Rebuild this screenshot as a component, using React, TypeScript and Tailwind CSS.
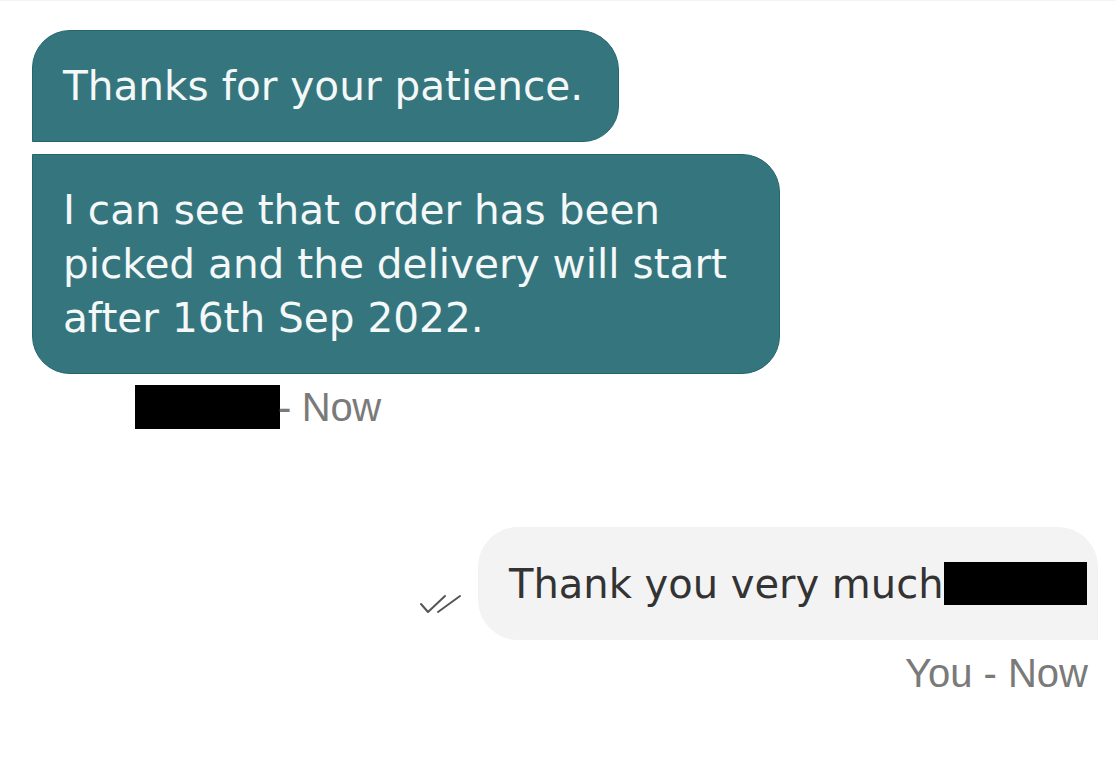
import React from "react";

const bubbleFont = { fontFamily: '"DejaVu Sans", "Open Sans", sans-serif' };
const metaFont = { fontFamily: '"Liberation Sans", Arial, sans-serif' };

function DoubleTick() {
  return (
    <svg width="44" height="20" viewBox="0 0 44 20" fill="none" className="shrink-0">
      <path d="M3 10 L10 18 L27 2" stroke="#555" strokeWidth="2" strokeLinecap="round" strokeLinejoin="round" />
      <path d="M20 18 L42 2" stroke="#555" strokeWidth="2" strokeLinecap="round" />
    </svg>
  );
}

export default function App() {
  return (
    <div className="min-h-screen bg-white border-t border-gray-100 pt-[29px]">
      {/* agent messages */}
      <div className="flex flex-col items-start pl-[32px]" style={bubbleFont}>
        <div className="w-[587px] bg-[#35767e] border border-[#23666f] text-[#f4f8f8] rounded-tl-[38px] rounded-tr-[40px] rounded-br-[36px] pl-[30px] py-[28px] text-[40.6px] leading-[54px] whitespace-nowrap">
          Thanks for your patience.
        </div>
        <div className="w-[748px] mt-[12px] bg-[#35767e] border border-[#23666f] text-[#f4f8f8] rounded-tr-[38px] rounded-br-[38px] rounded-bl-[38px] pl-[30px] py-[28px] text-[40.6px] leading-[54px] whitespace-nowrap">
          <span className="block">I can see that order has been</span>
          <span className="block">picked and the delivery will start</span>
          <span className="block">after 16th Sep 2022.</span>
        </div>
        <div className="mt-[11px] ml-[103px] flex items-center text-[40px] leading-[44px] text-[#7a7a7a] tracking-[-0.3px]" style={metaFont}>
          <span className="inline-block w-[145px] h-[44px] bg-black" />
          <span className="-ml-[2px]">- Now</span>
        </div>
      </div>

      {/* my message */}
      <div className="mt-[98px] flex flex-col items-end pr-[18px]">
        <div className="flex items-center gap-[16px]">
          <div className="mt-[40px]">
            <DoubleTick />
          </div>
          <div
            className="w-[620px] h-[113px] bg-[#f3f3f3] rounded-tl-[40px] rounded-bl-[40px] rounded-tr-[40px] pl-[31px] flex items-center text-[40px] text-[#333]"
            style={bubbleFont}
          >
            <span>Thank you very much</span>
            <span className="inline-block w-[143px] h-[43px] bg-black" />
          </div>
        </div>
        <div className="mt-[11px] mr-[10px] text-[40px] leading-[44px] text-[#7a7a7a]" style={metaFont}>
          You - Now
        </div>
      </div>
    </div>
  );
}
